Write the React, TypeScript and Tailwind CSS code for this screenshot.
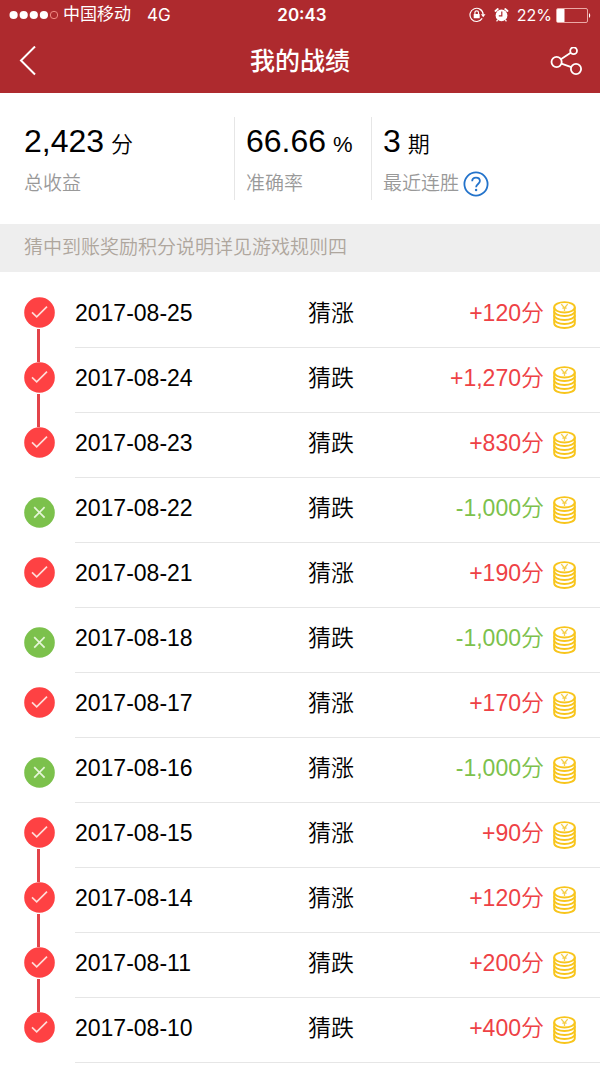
type Guess = "猜涨" | "猜跌";

interface GameRecord {
  date: string;
  guess: Guess;
  points: number;
  linked?: boolean;
}

const RECORDS: GameRecord[] = [
  { date: "2017-08-25", guess: "猜涨", points: 120, linked: true },
  { date: "2017-08-24", guess: "猜跌", points: 1270, linked: true },
  { date: "2017-08-23", guess: "猜跌", points: 830 },
  { date: "2017-08-22", guess: "猜跌", points: -1000 },
  { date: "2017-08-21", guess: "猜涨", points: 190 },
  { date: "2017-08-18", guess: "猜跌", points: -1000 },
  { date: "2017-08-17", guess: "猜涨", points: 170 },
  { date: "2017-08-16", guess: "猜涨", points: -1000 },
  { date: "2017-08-15", guess: "猜涨", points: 90, linked: true },
  { date: "2017-08-14", guess: "猜涨", points: 120, linked: true },
  { date: "2017-08-11", guess: "猜跌", points: 200, linked: true },
  { date: "2017-08-10", guess: "猜跌", points: 400 },
];

const formatPoints = (points: number): string => {
  const sign = points > 0 ? "+" : "-";
  return `${sign}${Math.abs(points).toLocaleString("en-US")}分`;
};

const LockIcon = () => (
  <svg width="17" height="16" viewBox="0 0 17 16" fill="none" aria-hidden="true">
    <path
      d="M13.2 11.4A6.6 6.6 0 1 1 14.2 7.6"
      stroke="currentColor"
      strokeWidth="1.2"
    />
    <path d="M11.9 7.2h4.6l-2.3 3z" fill="currentColor" />
    <rect x="4.7" y="6.9" width="6" height="4.3" rx="0.5" fill="currentColor" />
    <path d="M5.9 7V5.6a1.8 1.8 0 0 1 3.6 0V7" stroke="currentColor" strokeWidth="1.2" />
  </svg>
);

const AlarmIcon = () => (
  <svg width="15" height="16" viewBox="0 0 15 16" fill="none" aria-hidden="true">
    <circle cx="7.5" cy="8.4" r="5.9" fill="currentColor" />
    <path
      d="M1.4 4 3.8 2M13.6 4l-2.4-2"
      stroke="currentColor"
      strokeWidth="1.8"
      strokeLinecap="round"
    />
    <path d="m3.6 12.8-1 1.5M11.4 12.8l1 1.5" stroke="currentColor" strokeWidth="1.2" />
    <path d="M7.8 4.6v4.2H4.8" stroke="#ae2a2e" strokeWidth="1.2" />
  </svg>
);

const BatteryIcon = () => (
  <svg width="35" height="15" viewBox="0 0 35 15" fill="none" aria-hidden="true">
    <rect x="0.5" y="0.5" width="31" height="14" rx="1.5" stroke="#eba9a6" />
    <rect x="1" y="1" width="7.5" height="13" rx="0.5" fill="currentColor" />
    <path d="M33 5.2c1.6.5 1.6 4.1 0 4.6z" fill="currentColor" />
  </svg>
);

const ShareIcon = () => (
  <svg width="32" height="30" viewBox="0 0 32 30" fill="none" aria-hidden="true">
    <g stroke="currentColor" strokeWidth="1.8">
      <circle cx="6.6" cy="15" r="5.1" />
      <circle cx="23.6" cy="3.8" r="3.4" />
      <circle cx="26" cy="22" r="5.1" />
      <path d="M10.9 12.2 20.7 5.7M11.4 16.6l9.9 3.6" />
    </g>
  </svg>
);

const CoinsIcon = () => (
  <svg
    className="mt-1"
    width="23"
    height="28"
    viewBox="0 0 23 28"
    fill="none"
    aria-hidden="true"
  >
    <g stroke="#f8c51c" strokeWidth="1.9">
      <ellipse cx="11.5" cy="6.3" rx="10.3" ry="5.2" />
      <path d="M1.2 6.3v15.9c0 2.7 4.6 4.8 10.3 4.8s10.3-2.1 10.3-4.8V6.3" />
      <path d="M1.2 10.3c0 2.7 4.6 4.7 10.3 4.7s10.3-2 10.3-4.7" />
      <path d="M1.2 14.3c0 2.7 4.6 4.7 10.3 4.7s10.3-2 10.3-4.7" />
      <path d="M1.2 18.3c0 2.7 4.6 4.7 10.3 4.7s10.3-2 10.3-4.7" />
    </g>
    <path
      d="M8.3 3.2 11.5 7l3.2-3.8M11.5 7v2.900M9.300 7.200h4.400"
      stroke="#f5cf4a"
      strokeWidth="1.3"
    />
  </svg>
);

const ResultMark = ({ won }: { won: boolean }) => (
  <svg
    className="shrink-0"
    width="31"
    height="31"
    viewBox="0 0 31 31"
    fill="none"
    role="img"
    aria-label={won ? "猜中" : "未猜中"}
  >
    <circle cx="15.5" cy="15.5" r="15.3" fill={won ? "#fe4143" : "#7cc14c"} />
    <path
      d={won ? "M8 15.3l4.7 4.5L23 9.7" : "M10.2 10.2l10.4 10.4M20.6 10.2 10.2 20.6"}
      stroke={won ? "#ffdcd8" : "#e6f6d8"}
      strokeWidth="1.7"
    />
  </svg>
);

const StatusBar = () => (
  <div className="grid h-[30px] grid-cols-3 items-center px-[9px] text-[17px] leading-[30px]">
    <div className="flex items-center whitespace-nowrap">
      <svg width="50" height="10" viewBox="0 0 50 10" fill="none" aria-hidden="true">
        <g fill="currentColor">
          <circle cx="4.6" cy="5" r="4.1" />
          <circle cx="14.7" cy="5" r="4.1" />
          <circle cx="24.8" cy="5" r="4.1" />
          <circle cx="34.9" cy="5" r="4.1" />
        </g>
        <circle cx="45" cy="5" r="3.7" stroke="#f08a82" />
      </svg>
      <span className="ml-1">中国移动</span>
      <span className="ml-4 font-['Inter',sans-serif]">4G</span>
    </div>
    <div className="pl-1 text-center font-['Inter',sans-serif] font-semibold">20:43</div>
    <div className="flex items-center justify-end">
      <LockIcon />
      <span className="ml-2">
        <AlarmIcon />
      </span>
      <span className="mr-1 ml-2 font-['Inter',sans-serif] text-[16px]">22%</span>
      <BatteryIcon />
    </div>
  </div>
);

const NavBar = () => (
  <div className="grid h-[63px] grid-cols-[1fr_auto_1fr] items-center px-[18px]">
    <button type="button" aria-label="返回" className="justify-self-start">
      <svg width="20" height="32" viewBox="0 0 20 32" fill="none" aria-hidden="true">
        <path d="M17 0.500 3 14.500l14 14" stroke="currentColor" strokeWidth="2" />
      </svg>
    </button>
    <h1 className="pb-0.5 text-[25px] leading-8 font-medium">我的战绩</h1>
    <button type="button" aria-label="分享" className="justify-self-end">
      <ShareIcon />
    </button>
  </div>
);

const Stat = ({
  value,
  unit,
  label,
  help = false,
}: {
  value: string;
  unit: string;
  label: string;
  help?: boolean;
}) => (
  <div>
    <div className="flex h-12 items-baseline gap-[7px] text-black">
      <span className="text-[32px] leading-[48px]">{value}</span>
      <span className="text-[22px] leading-[48px] font-[350]">{unit}</span>
    </div>
    <div className="flex h-[35px] items-center gap-1 pt-0.5 text-[19px] leading-8 font-[350] whitespace-nowrap text-[#999]">
      {label}
      {help && (
        <button type="button" aria-label="连胜说明" className="text-[#2373cb]">
          <svg width="26" height="26" viewBox="0 0 26 26" fill="none" aria-hidden="true">
            <g stroke="currentColor" strokeWidth="1.8">
              <circle cx="13" cy="13" r="11.6" />
              <path d="M9.2 10.3c0-2.2 1.6-3.7 3.8-3.7s3.9 1.4 3.9 3.5c0 2.8-3.8 3-3.8 6.1" />
            </g>
            <circle cx="13.1" cy="19" r="1.2" fill="currentColor" />
          </svg>
        </button>
      )}
    </div>
  </div>
);

const RecordRow = ({ date, guess, points, linked }: GameRecord) => {
  const won = points > 0;
  return (
    <li className="flex h-[65px] gap-5 pl-6">
      <div className={won ? "w-[31px] pt-[14px]" : "w-[31px] pt-[19px]"}>
        <ResultMark won={won} />
        {linked && <div className="mt-px ml-[13px] h-[33px] w-[3px] bg-[#e3444a]" />}
      </div>
      <div className="grid flex-1 grid-cols-[233fr_268fr] items-center border-b border-[#e6e6e6] pr-6 pb-1 text-[23px] leading-8 font-[350] text-black">
        <span>{date}</span>
        <div className="flex items-center justify-between">
          <span>{guess}</span>
          <div className="flex items-center gap-[9px]">
            <span className={won ? "text-[#ee4145]" : "text-[#7cc14c]"}>
              {formatPoints(points)}
            </span>
            <CoinsIcon />
          </div>
        </div>
      </div>
    </li>
  );
};

const App = () => {
  return (
    <div className="min-h-screen bg-white font-['Liberation_Sans','Noto_Sans_CJK_SC',sans-serif]">
      <header className="bg-[#ae2a2e] text-white">
        <StatusBar />
        <NavBar />
      </header>

      {/* Totals */}
      <section className="grid grid-cols-[235fr_137fr_228fr] py-6">
        <div className="border-r border-[#e6e6e6] pl-6">
          <Stat value="2,423" unit="分" label="总收益" />
        </div>
        <div className="border-r border-[#e6e6e6] pl-[11px]">
          <Stat value="66.66" unit="%" label="准确率" />
        </div>
        <div className="pl-[11px]">
          <Stat value="3" unit="期" label="最近连胜" help />
        </div>
      </section>

      <p className="bg-[#eee] px-6 text-[19px] leading-[48px] font-[350] text-[#aea69d]">
        猜中到账奖励积分说明详见游戏规则四
      </p>

      {/* History */}
      <ol className="pt-[11px]">
        {RECORDS.map((record) => (
          <RecordRow key={record.date} {...record} />
        ))}
      </ol>
    </div>
  );
};

export default App;
